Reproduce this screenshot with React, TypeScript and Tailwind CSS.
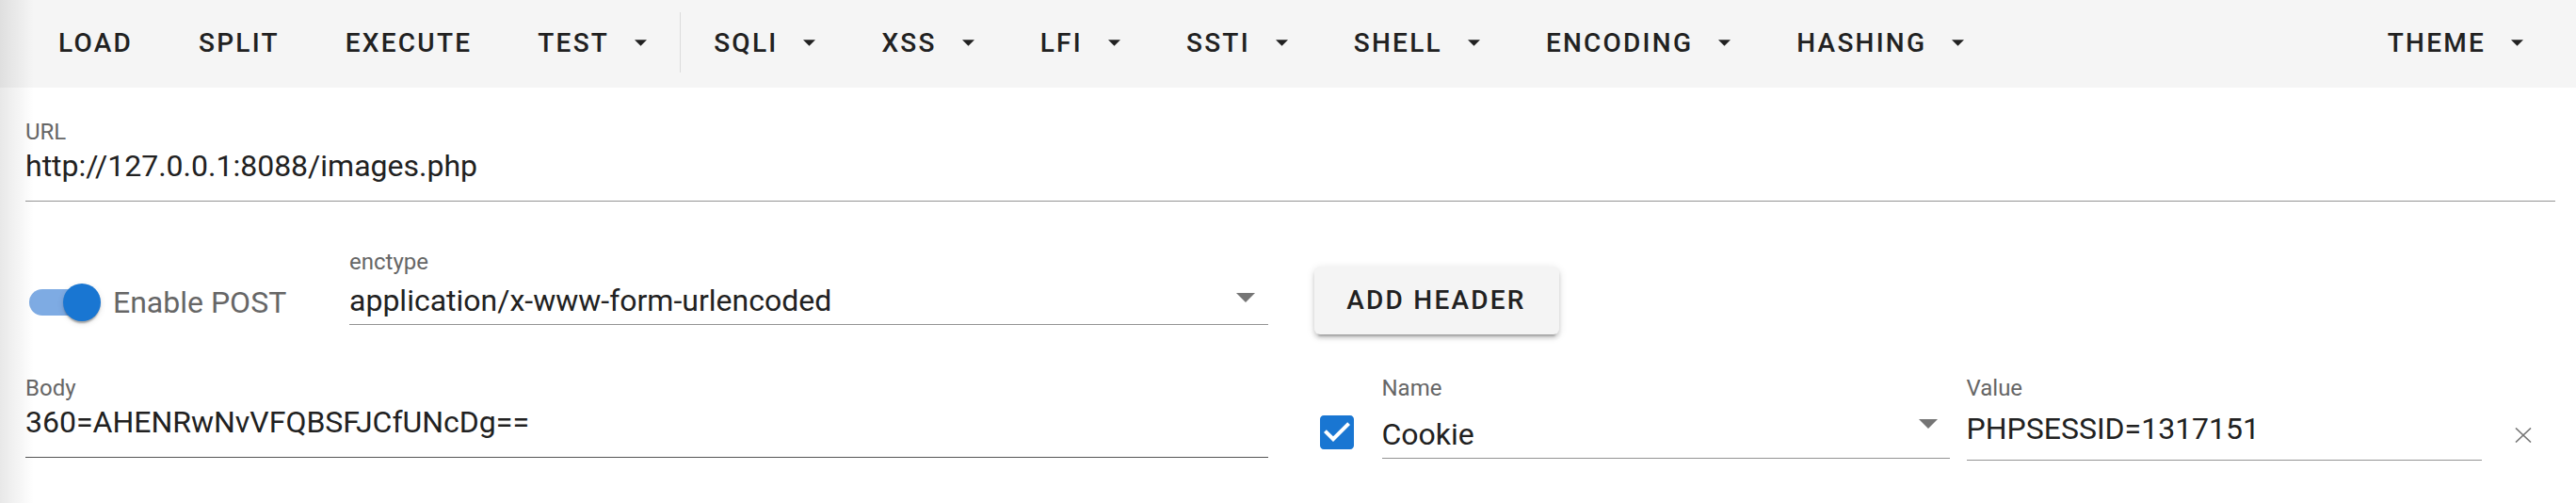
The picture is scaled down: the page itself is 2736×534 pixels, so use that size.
import React from 'react';

interface MenuItem {
    label: string;
    drop?: boolean;
}

const LEFT_MENU: MenuItem[] = [
    { label: 'LOAD' },
    { label: 'SPLIT' },
    { label: 'EXECUTE' },
    { label: 'TEST', drop: true },
];

const RIGHT_MENU: MenuItem[] = [
    { label: 'SQLI', drop: true },
    { label: 'XSS', drop: true },
    { label: 'LFI', drop: true },
    { label: 'SSTI', drop: true },
    { label: 'SHELL', drop: true },
    { label: 'ENCODING', drop: true },
    { label: 'HASHING', drop: true },
];

function Caret({ className = '' }: { className?: string }) {
    return (
        <svg width="13" height="7" viewBox="0 0 10 5" className={className}>
            <path d="M0 0l5 5 5-5z" fill="currentColor" />
        </svg>
    );
}

function DropArrow({ className = '' }: { className?: string }) {
    return (
        <svg width="20" height="10" viewBox="0 0 10 5" className={`text-[#757575] ${className}`}>
            <path d="M0 0l5 5 5-5z" fill="currentColor" />
        </svg>
    );
}

function MenuButton({ item }: { item: MenuItem }) {
    return (
        <button className="flex items-center px-[35px] pb-[2px] text-[28px] leading-[28px] font-medium tracking-[0.08em] text-[#212121]">
            {item.label}
            {item.drop && <Caret className="ml-[27px]" />}
        </button>
    );
}

export default function App() {
    return (
        <div className="relative w-full h-[534px] overflow-hidden bg-white [font-family:Roboto,'Liberation_Sans',sans-serif]">
            {/* toolbar */}
            <div className="flex h-[93px] bg-[#f5f5f5] pl-[27px] pr-[21px]">
                {LEFT_MENU.map((item) => (
                    <MenuButton key={item.label} item={item} />
                ))}
                <div className="w-px h-[64px] mt-[13px] bg-[#dcdcdc]" />
                {RIGHT_MENU.map((item) => (
                    <MenuButton key={item.label} item={item} />
                ))}
                <div className="ml-auto flex">
                    <MenuButton item={{ label: 'THEME', drop: true }} />
                </div>
            </div>

            <div className="pl-[27px] pr-[22px]">
                {/* URL */}
                <div className="mt-[35px]">
                    <div className="text-[24px] leading-[24px] text-[#666]">URL</div>
                    <div className="mt-[8px] pb-[21px] border-b border-[#949494] text-[32px] leading-[32px] text-[#212121]">
                        http://127.0.0.1:8088/images.php
                    </div>
                </div>

                {/* POST toggle / enctype / add header */}
                <div className="mt-[52px] grid grid-cols-2 gap-x-[48px]">
                    <div className="flex items-start">
                        <div className="w-[344px] flex items-center mt-[35px] pl-[4px]">
                            <div className="relative w-[76px] h-[40px] shrink-0">
                                <div className="absolute left-0 top-[6px] w-[68px] h-[28px] rounded-full bg-[#7eabe3]" />
                                <div className="absolute left-[36px] top-0 w-[40px] h-[40px] rounded-full bg-[#1976d2] shadow-[0_4px_2px_-2px_rgba(0,0,0,0.2),0_2px_2px_0_rgba(0,0,0,0.14),0_2px_6px_0_rgba(0,0,0,0.12)]" />
                            </div>
                            <span className="ml-[13px] text-[32px] leading-[32px] text-[#666]">Enable POST</span>
                        </div>
                        <div className="flex-1">
                            <div className="text-[24px] leading-[24px] text-[#666]">enctype</div>
                            <div className="mt-[13px] pb-[9px] border-b border-[#949494] flex items-start justify-between text-[32px] leading-[32px] text-[#212121]">
                                <span>application/x-www-form-urlencoded</span>
                                <DropArrow className="mt-[8px] mr-[14px]" />
                            </div>
                        </div>
                    </div>
                    <div className="flex items-start">
                        <button className="mt-[17px] ml-px w-[260px] h-[72px] rounded-[6px] bg-[#f4f4f4] text-[28px] leading-[28px] font-medium tracking-[0.08em] text-[#212121] shadow-[0_6px_2px_-4px_rgba(0,0,0,0.2),0_4px_4px_0_rgba(0,0,0,0.14),0_2px_10px_0_rgba(0,0,0,0.12)]">
                            ADD HEADER
                        </button>
                    </div>
                </div>

                {/* body / header row */}
                <div className="mt-[45px] grid grid-cols-2 gap-x-[48px]">
                    <div>
                        <div className="text-[24px] leading-[24px] text-[#666]">Body</div>
                        <div className="mt-[8px] pb-[21px] border-b border-[#555] text-[32px] leading-[32px] text-[#212121]">
                            360=AHENRwNvVFQBSFJCfUNcDg==
                        </div>
                    </div>
                    <div className="flex items-start">
                        <svg width="48" height="48" viewBox="0 0 24 24" className="mt-[35px] ml-px shrink-0 text-[#1976d2]">
                            <path
                                fill="currentColor"
                                d="M19 3H5c-1.11 0-2 .9-2 2v14c0 1.1.89 2 2 2h14c1.11 0 2-.9 2-2V5c0-1.1-.89-2-2-2zm-9 14l-5-5 1.41-1.41L10 14.17l7.59-7.59L19 8l-9 9z"
                            />
                        </svg>
                        <div className="ml-[24px] w-[603px] shrink-0">
                            <div className="text-[24px] leading-[24px] text-[#666]">Name</div>
                            <div className="mt-[21px] pb-[9px] border-b border-[#949494] flex items-start justify-between text-[32px] leading-[32px] text-[#212121]">
                                <span>Cookie</span>
                                <DropArrow className="mr-[13px]" />
                            </div>
                        </div>
                        <div className="ml-[18px] w-[547px] shrink-0">
                            <div className="text-[24px] leading-[24px] text-[#666]">Value</div>
                            <div className="mt-[15px] pb-[17px] border-b border-[#949494] text-[32px] leading-[32px] text-[#212121]">
                                PHPSESSID=1317151
                            </div>
                        </div>
                        <svg width="18" height="16" viewBox="0 0 18 16" className="ml-[35px] mt-[54px] shrink-0 text-[#757575]">
                            <path d="M1 0.5L17 15.5M17 0.5L1 15.5" stroke="currentColor" strokeWidth="1.6" />
                        </svg>
                    </div>
                </div>
            </div>

            {/* soft shade along the left edge */}
            <div className="pointer-events-none absolute left-0 top-0 bottom-0 w-[36px] bg-gradient-to-r from-black/[0.09] to-transparent" />
        </div>
    );
}
